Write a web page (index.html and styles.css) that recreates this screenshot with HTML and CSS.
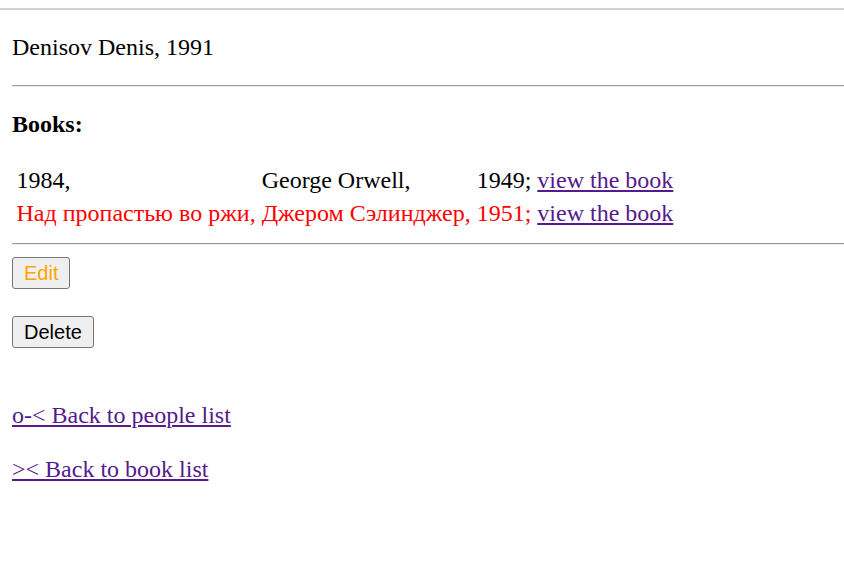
FILE: index.html
```html
<!DOCTYPE html>
<html>
<head>
<meta charset="utf-8">
<link rel="stylesheet" href="styles.css">
</head>
<body>
<div class="topline"></div>
<main class="page">
  <p class="person">Denisov Denis, 1991</p>
  <hr class="rule">
  <p class="heading">Books:</p>
  <table class="books">
    <tr>
      <td>1984,</td>
      <td>George Orwell,</td>
      <td>1949; <a class="link" href="#">view the book</a></td>
    </tr>
    <tr class="overdue">
      <td>Над пропастью во ржи,</td>
      <td>Джером Сэлинджер,</td>
      <td>1951; <a class="link" href="#">view the book</a></td>
    </tr>
  </table>
  <hr class="rule rule-tight">
  <form class="form form-edit"><button type="button" class="btn btn-edit">Edit</button></form>
  <form class="form form-delete"><button type="button" class="btn">Delete</button></form>
  <p class="back back-first"><a class="link" href="#">o-&lt; Back to people list</a></p>
  <p class="back back-second"><a class="link" href="#">&gt;&lt; Back to book list</a></p>
</main>
</body>
</html>
```

FILE: styles.css
```css
html, body {
  margin: 0;
  padding: 0;
  background: #ffffff;
}
body {
  font-family: "Liberation Serif", "Times New Roman", serif;
  font-size: 24px;
  color: #000000;
  overflow: hidden;
}
.topline {
  margin-top: 8px;
  height: 2px;
  background: #d0d0d0;
}
.page {
  padding-left: 12px;
}
.person {
  margin: 24px 0;
}
.rule {
  margin: 24px 0;
  border: 0;
  height: 2px;
  background: linear-gradient(#9a9a9a 0 1px, #eeeeee 1px 2px);
}
.rule-tight {
  margin: 12px 0 12px;
}
.heading {
  margin: 24px 0;
  font-weight: bold;
}
.books {
  border-collapse: separate;
  border-spacing: 3px;
  font-size: 24px;
}
.books td {
  padding: 1.5px;
  white-space: nowrap;
}
.overdue td {
  color: #ff0000;
}
.link {
  color: #551a8b;
  text-decoration: underline;
}
.form {
  margin: 0;
}
.form-edit {
  margin-bottom: 27px;
}
.btn {
  font-family: "Liberation Sans", Arial, sans-serif;
  font-size: 20px;
  height: 32px;
  padding: 0 11px;
  background: #efefef;
  color: #000000;
  border: 1px solid #767676;
  border-radius: 3px;
  line-height: 30px;
}
.btn-edit {
  color: #ffa500;
}
.back {
  margin: 24px 0;
}
.back-first {
  margin-top: 54px;
}
.back-second {
  margin-top: 27px;
}
```
